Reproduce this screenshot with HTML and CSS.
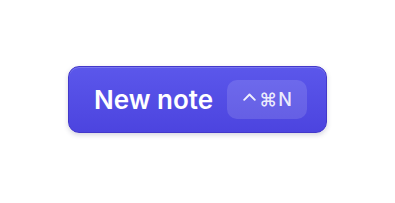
FILE: index.html
```html
<!DOCTYPE html>
<html>
<head>
<meta charset="utf-8">
<link rel="stylesheet" href="styles.css">
</head>
<body>
<div class="stage">
  <button class="new-note">
    <span class="label">New note</span>
    <span class="kbd"><svg class="ctrl" width="13" height="8" viewBox="0 0 13 8" aria-label="Control"><polyline points="1.2,6.8 6.5,1.5 11.8,6.8" fill="none" stroke="currentColor" stroke-width="1.9" stroke-linecap="round" stroke-linejoin="round"/></svg><span class="keys">⌘N</span></span>
  </button>
</div>
</body>
</html>
```
FILE: styles.css
```css
html, body { margin: 0; padding: 0; background: #ffffff; }
.stage {
  height: 198px;
  display: flex;
  align-items: center;
  justify-content: center;
}
.new-note {
  display: flex;
  align-items: center;
  gap: 14px;
  box-sizing: border-box;
  height: 67px;
  padding: 0 19px 0 25px;
  border: 1px solid #4338ca;
  border-radius: 11px;
  background: linear-gradient(180deg, #5b57eb 0%, #4c44df 100%);
  box-shadow: 0 2px 5px rgba(30, 27, 75, 0.18), inset 0 1px 0 rgba(255,255,255,0.18);
  font-family: Inter, "Noto Sans", sans-serif;
  color: #ffffff;
  cursor: pointer;
}
.label {
  font-size: 26px;
  font-weight: 600;
  letter-spacing: 0;
}
.kbd {
  display: flex;
  align-items: center;
  justify-content: center;
  gap: 3px;
  width: 80px;
  height: 39px;
  padding-left: 2px;
  box-sizing: border-box;
  border-radius: 10px;
  background: rgba(255, 255, 255, 0.13);
  font-size: 18px;
  font-weight: 500;
  color: rgba(255, 255, 255, 0.9);
}
.ctrl {
  display: block;
  margin-bottom: 5px;
}
.keys {
  letter-spacing: 1px;
}
```
